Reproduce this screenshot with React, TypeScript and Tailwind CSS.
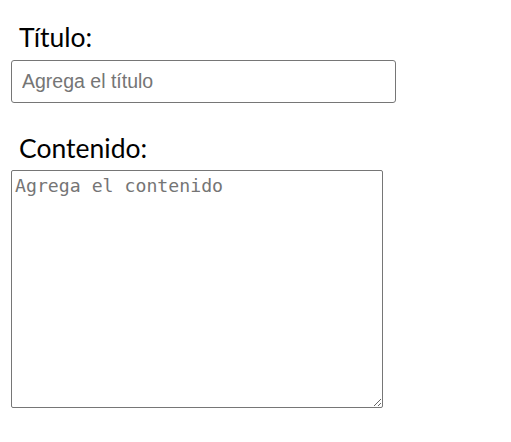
import React from "react";

export default function App() {
  return (
    <div className="min-h-screen bg-white pt-[21px]">
      <form className="flex flex-col">
        <label
          htmlFor="titulo"
          className="ml-[19px] font-['Lato',_'Open_Sans',_sans-serif] text-[26.5px] leading-[32px] text-black"
        >
          Título:
        </label>
        <input
          id="titulo"
          type="text"
          placeholder="Agrega el título"
          className="ml-[11px] mt-[7px] h-[43px] w-[385px] rounded-[3px] border border-[#767676] px-[10px] font-['Liberation_Sans',_Arial,_sans-serif] text-[19.5px] text-black placeholder:text-[#757575] outline-none"
        />
        <label
          htmlFor="contenido"
          className="ml-[19px] mt-[29px] font-['Lato',_'Open_Sans',_sans-serif] text-[26.5px] leading-[32px] text-black"
        >
          Contenido:
        </label>
        <textarea
          id="contenido"
          placeholder="Agrega el contenido"
          className="ml-[11px] mt-[6px] h-[238px] w-[372px] rounded-[2px] border border-[#767676] px-[3px] py-[4px] font-['DejaVu_Sans_Mono',_'Liberation_Mono',_monospace] text-[18.2px] leading-[22px] text-black placeholder:text-[#757575] outline-none"
        />
      </form>
    </div>
  );
}
